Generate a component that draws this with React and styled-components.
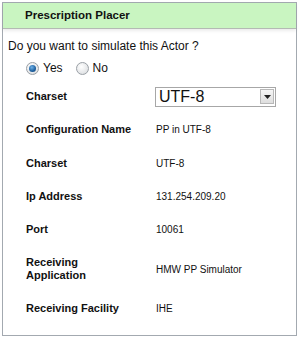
import React from "react";
import styled, { createGlobalStyle } from "styled-components";

const Global = createGlobalStyle`
  body {
    margin: 0;
    background: #ffffff;
    font-family: "Liberation Sans", Arial, sans-serif;
  }
`;

const Page = styled.div`
  padding: 2px;
  width: 299px;
  box-sizing: border-box;
`;

const Panel = styled.div`
  border: 1px solid #a3a9b0;
  background: #fff;
  height: 334px;
  box-sizing: border-box;
`;

const Header = styled.div`
  background: #c9f5c1;
  border-bottom: 1px solid #b4bab4;
  height: 26px;
  box-sizing: border-box;
  padding: 6px 0 0 22px;
  font-size: 11.5px;
  font-weight: bold;
  color: #111;
  box-shadow: 0 2px 3px rgba(0, 0, 0, 0.08);
`;

const Body = styled.div`
  padding: 10px 0 0 5px;
`;

const Question = styled.div`
  font-size: 12px;
  color: #111;
`;

const Choices = styled.div`
  display: flex;
  align-items: center;
  margin: 8px 0 0 18px;
  font-size: 12px;
  color: #111;
`;

const Radio = styled.span`
  display: inline-block;
  width: 11px;
  height: 11px;
  border-radius: 50%;
  border: 1px solid #9aa0a6;
  background: radial-gradient(circle at 40% 35%, #ffffff 0%, #e2e4e6 70%, #c9cbcd 100%);
  margin-right: 4px;
  position: relative;

  ${({ checked }) =>
    checked &&
    `
    &::after {
      content: "";
      position: absolute;
      left: 2px;
      top: 2px;
      width: 7px;
      height: 7px;
      border-radius: 50%;
      background: radial-gradient(circle at 40% 35%, #6fb2e8 0%, #1d5f9e 60%, #123f6e 100%);
    }
  `}
`;

const ChoiceLabel = styled.span`
  margin-right: 13px;
`;

const Table = styled.div`
  display: grid;
  grid-template-columns: 130px 1fr;
  margin: 5px 0 0 18px;
`;

const Label = styled.div`
  font-size: 11px;
  font-weight: bold;
  color: #111;
  display: flex;
  align-items: center;
  height: ${({ h }) => h || 33.25}px;
  line-height: 13px;
`;

const Value = styled.div`
  font-size: 10px;
  color: #111;
  display: flex;
  align-items: center;
  height: ${({ h }) => h || 33.25}px;
`;

const Select = styled.div`
  display: flex;
  align-items: center;
  justify-content: space-between;
  width: 121px;
  height: 20px;
  box-sizing: border-box;
  border: 1px solid #a7a7a7;
  padding: 0 1px 0 3px;
  font-size: 16px;
  color: #111;
  margin-left: -1px;
`;

const Arrow = styled.span`
  width: 14px;
  height: 15px;
  box-sizing: border-box;
  border: 1px solid #b8b8b8;
  background: linear-gradient(#f6f6f6, #dedede);
  display: flex;
  align-items: center;
  justify-content: center;
`;

const rows = [
  ["Configuration Name", "PP in UTF-8"],
  ["Charset", "UTF-8"],
  ["Ip Address", "131.254.209.20"],
  ["Port", "10061"],
  ["Receiving Application", "HMW PP Simulator"],
  ["Receiving Facility", "IHE"],
];

export default function App() {
  return (
    <>
      <Global />
      <Page>
        <Panel>
          <Header>Prescription Placer</Header>
          <Body>
            <Question>Do you want to simulate this Actor ?</Question>
            <Choices>
              <Radio checked />
              <ChoiceLabel>Yes</ChoiceLabel>
              <Radio />
              <ChoiceLabel>No</ChoiceLabel>
            </Choices>
            <Table>
              <Label>Charset</Label>
              <Value>
                <Select>
                  UTF-8
                  <Arrow>
                    <svg width="7" height="4" viewBox="0 0 7 4">
                      <path d="M0 0h7L3.5 4z" fill="#222" />
                    </svg>
                  </Arrow>
                </Select>
              </Value>
              {rows.map(([k, v]) => {
                const tall = k === "Receiving Application";
                return (
                  <React.Fragment key={k}>
                    <Label h={tall ? 46 : undefined}>
                      {tall ? (
                        <span>
                          Receiving
                          <br />
                          Application
                        </span>
                      ) : (
                        k
                      )}
                    </Label>
                    <Value h={tall ? 46 : undefined}>{v}</Value>
                  </React.Fragment>
                );
              })}
            </Table>
          </Body>
        </Panel>
      </Page>
    </>
  );
}
